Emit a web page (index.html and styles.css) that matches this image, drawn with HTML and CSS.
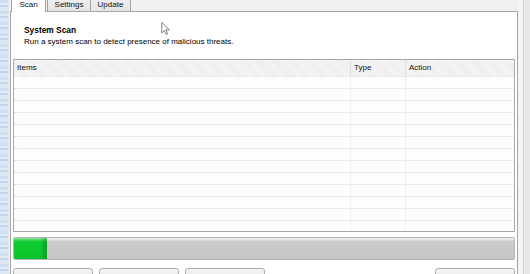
FILE: index.html
```html
<!DOCTYPE html>
<html lang="en">
<head>
  <meta charset="UTF-8" />
  <title>System Scan</title>
  <link rel="stylesheet" href="styles.css">
</head>
<body>
  <div class="window">
    <div class="frame-left"></div>

    <div class="main">
      <div class="tabs">
        <div class="tab active">Scan</div>
        <div class="tab tab-settings">Settings</div>
        <div class="tab tab-update">Update</div>
      </div>

      <div class="panel">
        <!-- mouse pointer caught in the capture -->
        <svg class="pointer" width="9" height="13" viewBox="0 0 12 19">
          <path d="M0.5 0.5 V16 L4.3 12.4 L6.9 18.3 L9.2 17.3 L6.6 11.5 H11.6 Z" fill="#fff" stroke="#4a4a4a" stroke-width="1" stroke-linejoin="round"/>
        </svg>

        <div class="intro">
          <h1>System Scan</h1>
          <p>Run a system scan to detect presence of malicious threats.</p>
        </div>

        <div class="list">
          <div class="list-head">
            <div class="col col-items">Items</div>
            <div class="col col-type">Type</div>
            <div class="col col-action">Action</div>
          </div>
          <div class="list-body">
            <div class="row"><span></span><span></span><span></span></div>
            <div class="row"><span></span><span></span><span></span></div>
            <div class="row"><span></span><span></span><span></span></div>
            <div class="row"><span></span><span></span><span></span></div>
            <div class="row"><span></span><span></span><span></span></div>
            <div class="row"><span></span><span></span><span></span></div>
            <div class="row"><span></span><span></span><span></span></div>
            <div class="row"><span></span><span></span><span></span></div>
            <div class="row"><span></span><span></span><span></span></div>
            <div class="row"><span></span><span></span><span></span></div>
            <div class="row"><span></span><span></span><span></span></div>
            <div class="row"><span></span><span></span><span></span></div>
            <div class="row"><span></span><span></span><span></span></div>
          </div>
        </div>

        <div class="progress">
          <div class="progress-fill" style="width:33px"></div>
        </div>

        <!-- button captions fall below the captured area -->
        <div class="buttons">
          <button class="btn" aria-label="Start Scan"></button>
          <button class="btn" aria-label="Stop"></button>
          <button class="btn" aria-label="Clean"></button>
          <button class="btn btn-close" aria-label="Close"></button>
        </div>
      </div>
    </div>

    <div class="frame-right"></div>
  </div>
</body>
</html>
```

FILE: styles.css
```css
/* Reset and base */
* { margin:0; padding:0; box-sizing:border-box; }
body {
  font-family: Tahoma, 'Liberation Sans', Arial, sans-serif;
  font-size: 8px; color: #000;
  height: 274px; overflow: hidden;
  background: #f0f0f0;
}

.window { display:flex; height:274px; overflow:hidden; }

/* window frame strips */
.frame-left {
  width: 8px; flex-shrink: 0;
  background: repeating-linear-gradient(180deg, #cfdff2 0 3px, #e2ebf7 3px 5px, #c3d6ee 5px 7px, #dce7f5 7px 11px);
}
.frame-right {
  width: 12px; flex-shrink: 0;
  background: linear-gradient(90deg, #f5f5f5 0 5px, #d4d4d4 5px 6px, #e8e8e8 6px);
}

.main {
  width: 510px; flex-shrink: 0;
  padding-left: 2px;
  display: flex; flex-direction: column;
  background: linear-gradient(90deg, #e6e6e6 0 1px, #f0f0f0 1px);
}
.main > *, .panel > * { flex-shrink: 0; }

/* tabs */
.tabs {
  height: 12px; margin-bottom: -1px; padding-left: 1px;
  display: flex; align-items: flex-end;
  overflow: hidden; position: relative; z-index: 1;
}
.tab {
  line-height: 10px; height: 18px; margin-bottom: 1px;
  padding: 0 0 1px; text-align: center;
  display: flex; align-items: flex-end; justify-content: center;
  border: 1px solid #a3a3a3; border-bottom: none;
  border-radius: 2px 2px 0 0;
  background: linear-gradient(#f4f4f4, #e4e4e4);
  color: #111;
}
.tab.active {
  width: 35px; height: 20px; margin-bottom: 0; padding-bottom: 2px;
  background: #fff;
}
.tab-settings { width: 44px; margin-left: 1px; }
.tab-update { width: 41px; margin-left: -1px; }

/* tab page */
.panel {
  position: relative;
  flex: 1 0 auto;
  border: 1px solid #a5a5a5;
  background: #fff;
  padding: 0 2px;
  display: flex; flex-direction: column;
}
.pointer { position:absolute; left:150px; top:10px; }

.intro { height: 47px; padding: 13px 0 0 11px; }
.intro h1 { font-size: 8.4px; font-weight: 700; line-height: 11px; }
.intro p { line-height: 11px; }

/* list view */
.list {
  height: 173px;
  border: 1px solid #a9a9a9;
  display: flex; flex-direction: column;
  overflow: hidden;
}
.list-head {
  height: 17px; display: flex; flex-shrink: 0;
  background: repeating-linear-gradient(45deg, #f6f6f6 0 1px, #ededed 1px 2px);
  border-bottom: 1px solid #ececec;
  line-height: 16px;
}
.col { padding-left: 3px; color: #111; }
.col-items { width: 336px; }
.col-type { width: 55px; border-left: 1px solid #e0e0e0; }
.col-action { flex: 1; border-left: 1px solid #e0e0e0; }

.list-body { flex: 1; overflow: hidden; background: #fdfdfd; }
.row { height: 12px; display: flex; border-bottom: 1px dotted #dcdcdc; }
.row span:nth-child(1) { width: 336px; }
.row span:nth-child(2) { width: 55px; border-left: 1px dotted #e4e4e4; }
.row span:nth-child(3) { flex: 1; border-left: 1px dotted #e4e4e4; }

/* progress */
.progress {
  height: 23px; margin-top: 5px;
  border: 1px solid #b4b4b4; border-radius: 2px;
  background: linear-gradient(#f2f2f2 0, #e2e2e2 2px, #cbcbcb 3px, #c6c6c6 100%);
  overflow: hidden;
}
.progress-fill {
  height: 100%;
  background: linear-gradient(#92e89e 0, #3fd656 2px, #10cb30 4px, #0bc42b 100%);
  box-shadow: inset -6px 0 3px -2px rgba(0,90,20,0.3);
}

/* buttons */
.buttons { display: flex; gap: 6px; margin-top: 8px; }
.btn {
  width: 80px; height: 22px;
  font: inherit; color: #000;
  border: 1px solid #acacac; border-radius: 3px;
  background: linear-gradient(#f6f6f6, #e6e6e6 50%, #dcdcdc 51%, #d9d9d9);
}
.btn-close { margin-left: auto; }
```
